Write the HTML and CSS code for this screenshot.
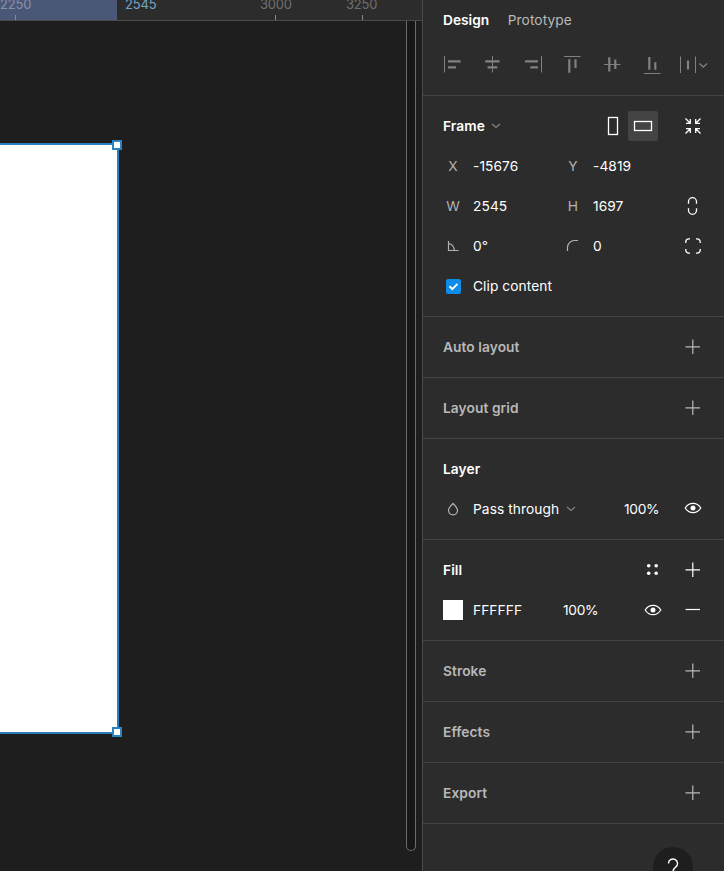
FILE: index.html
```html
<!DOCTYPE html>
<html lang="en">
<head>
<meta charset="utf-8">
<title>Design panel</title>
<link rel="stylesheet" href="styles.css">
</head>
<body>
<svg class="defs" aria-hidden="true">
  <symbol id="plus" viewBox="0 0 40 40"><path d="M12.500 19.800h14.500M19.800 12.500v14.500" stroke-width="1.200"/></symbol>
  <symbol id="chevron" viewBox="0 0 10 6"><path d="M1 1l4 3.500L9 1" stroke-width="1.200"/></symbol>
  <symbol id="eye" viewBox="0 0 40 40"><path d="M12.200 20c1.800-3 4.500-4.700 7.800-4.700s6 1.700 7.800 4.700c-1.800 3-4.500 4.700-7.800 4.700s-6-1.700-7.800-4.700z" stroke-width="1.200"/><circle cx="20" cy="20" r="2.500" fill="currentColor" stroke="none"/></symbol>
</svg>
<div class="app">
  <main class="canvas">
    <div class="ruler">
      <div class="range"></div>
      <span class="mark m2250">2250</span>
      <span class="mark m2545">2545</span>
      <span class="mark m3000">3000</span>
      <span class="mark m3250">3250</span>
      <i class="tick t2250"></i><i class="tick t3000"></i><i class="tick t3250"></i>
    </div>
    <div class="frame"><i class="handle top"></i><i class="handle bottom"></i></div>
    <div class="scrollbar"></div>
  </main>
  <aside class="panel">
    <nav class="tabs"><span class="active">Design</span><span>Prototype</span></nav>
    <div class="align">
      <svg class="icon"><path d="M11.500 11v16.500"/><path class="bar" d="M15 16.300h12.700M15 22.300h8"/></svg>
      <svg class="icon"><path d="M19.500 11v16.500"/><path class="bar" d="M12.200 16.300h14.400M14.500 22.300h9.800"/></svg>
      <svg class="icon"><path d="M28.500 11v16.500"/><path class="bar" d="M12 16.300h13M17.300 22.300h7.700"/></svg>
      <svg class="icon"><path d="M11 11.500h16.700"/><path class="bar" d="M16.300 14.300v13.400M22.500 14.300v8.700"/></svg>
      <svg class="icon"><path d="M11 19.500h16.500"/><path class="bar" d="M16.300 12.300v14.200M22.300 14.500v9.500"/></svg>
      <svg class="icon"><path d="M11 28.500h16.700"/><path class="bar" d="M16.300 12v12.700M22.300 17.300v7.400"/></svg>
      <svg class="icon"><path d="M7.500 11.500v16.500M22.500 11.500v16.500"/><path class="bar" d="M15 15.500v9"/><path d="M26.500 18.500l3.800 3.500 3.800-3.500" stroke-width="1.300"/></svg>
    </div>
    <section>
      <div class="row">
        <h2 class="title">Frame <svg class="chev"><use href="#chevron"/></svg></h2>
        <div class="orient">
          <span class="btn"><svg class="btn-icon"><rect x="10.500" y="6.500" width="9" height="17" stroke-width="1.300"/></svg></span>
          <span class="btn on"><svg class="btn-icon"><rect x="6.500" y="10.500" width="17" height="9" stroke-width="1.300"/></svg></span>
        </div>
        <svg class="icon end"><path d="M12.500 12.500l4.500 4.500M27.500 12.500l-4.500 4.500M12.500 27.500l4.500-4.500M27.500 27.500l-4.500-4.500M17.300 13v4.300H13M22.700 13v4.300H27M13 22.700h4.300V27M27 22.700h-4.300V27" stroke-width="1.300"/></svg>
      </div>
      <div class="grid"><span class="key">X</span><span>-15676</span><span class="key">Y</span><span>-4819</span></div>
      <div class="grid"><span class="key">W</span><span>2545</span><span class="key">H</span><span>1697</span>
        <svg class="icon"><path d="M15.500 17.800v-2.100a4 4 0 0 1 8 0v2.100M15.500 22.200v2.100a4 4 0 0 0 8 0v-2.100" stroke-width="1.300"/></svg></div>
      <div class="grid">
        <svg class="icon dim"><path d="M15.500 15v9.500h10M15.500 17.500c3.300.6 5.500 3 5.800 6.800" stroke-width="1.200"/></svg><span>0°</span>
        <svg class="icon dim"><path d="M14.500 25v-3.500a7 7 0 0 1 7-7h3.500" stroke-width="1.200"/></svg><span>0</span>
        <svg class="icon"><path d="M12.800 17v-1.200a3 3 0 0 1 3-3H17M23 12.800h1.200a3 3 0 0 1 3 3V17M27.200 23v1.200a3 3 0 0 1-3 3H23M17 27.200h-1.200a3 3 0 0 1-3-3V23" stroke-width="1.300"/></svg></div>
      <div class="grid"><span class="check"><svg class="check-icon"><path d="M3.500 7.300l2.800 2.800 5.200-5.200" stroke-width="2"/></svg></span><span>Clip content</span></div>
    </section>
    <section class="empty"><div class="row"><h2 class="title">Auto layout</h2><svg class="icon end"><use href="#plus"/></svg></div></section>
    <section class="empty"><div class="row"><h2 class="title">Layout grid</h2><svg class="icon end"><use href="#plus"/></svg></div></section>
    <section>
      <div class="row"><h2 class="title">Layer</h2></div>
      <div class="grid layer">
        <svg class="icon dim"><path d="M20 14.500c2.500 2.600 4.500 4.400 4.500 6.800a4.500 4.500 0 0 1-9 0c0-2.400 2-4.200 4.500-6.800z" stroke-width="1.200"/></svg>
        <span>Pass through <svg class="chev"><use href="#chevron"/></svg></span><span class="percent">100%</span>
        <svg class="icon eye"><use href="#eye"/></svg></div>
    </section>
    <section>
      <div class="row"><h2 class="title">Fill</h2>
        <svg class="icon end"><g fill="currentColor" stroke="none"><circle cx="15.700" cy="15.800" r="1.800"/><circle cx="23.200" cy="15.800" r="1.800"/><circle cx="15.700" cy="23.300" r="1.800"/><circle cx="23.200" cy="23.300" r="1.800"/></g></svg>
        <svg class="icon"><use href="#plus"/></svg></div>
      <div class="grid fill"><span class="swatch"></span><span>FFFFFF</span><span class="percent">100%</span>
        <svg class="icon"><use href="#eye"/></svg><svg class="icon"><path d="M12.500 19.500h14.500" stroke-width="1.200"/></svg></div>
    </section>
    <section class="empty"><div class="row"><h2 class="title">Stroke</h2><svg class="icon end"><use href="#plus"/></svg></div></section>
    <section class="empty"><div class="row"><h2 class="title">Effects</h2><svg class="icon end"><use href="#plus"/></svg></div></section>
    <section class="empty"><div class="row"><h2 class="title">Export</h2><svg class="icon end"><use href="#plus"/></svg></div></section>
  </aside>
  <div class="help"><svg class="help-icon"><path d="M15.500 16.500a4.500 4.500 0 1 1 7.400 3.400c-1.800 1.500-2.900 2.300-2.900 5.100M20 28v1.500" stroke-width="1.400"/></svg></div>
</div>
</body>
</html>
```
FILE: styles.css
```css
* { box-sizing: border-box; }
body { margin: 0; background: #1e1e1e; color: #fff; font: 13.75px/20px Inter, sans-serif; letter-spacing: 0.07px; }
.defs { position: absolute; width: 0; height: 0; }
svg { fill: none; stroke: currentColor; flex: none; }
.app { position: relative; display: flex; width: 724px; height: 871px; overflow: hidden; }

.canvas { position: relative; width: 422px; background: #1e1e1e; overflow: hidden; }
.ruler { position: relative; height: 21px; background: #2c2c2c; border-bottom: 1px solid #494949; }
.range { width: 117px; height: 20px; background: #4a5878; }
.mark { position: absolute; top: -6px; color: #6f6f6f; font-size: 13px; letter-spacing: -0.2px; }
.m2250 { left: 0; color: #8990a3; }
.m2545 { left: 125px; color: #72a5c8; }
.m3000 { left: 260px; }
.m3250 { left: 346px; }
.tick { position: absolute; top: 15px; width: 1px; height: 5px; background: #8a8a8a; }
.t2250 { left: 15px; }
.t3000 { left: 275px; }
.t3250 { left: 362px; }
.frame { position: absolute; left: -10px; top: 143px; width: 129px; height: 591px; background: #fff; border: 2px solid #2b7fb8; }
.handle { position: absolute; right: -5px; width: 10px; height: 10px; background: #fff; border: 2px solid #2b83bf; }
.top { top: -5px; }
.bottom { bottom: -5px; }
.scrollbar { position: absolute; left: 406px; top: 21px; width: 10px; height: 830px; background: #161616; border: 1px solid #6c6c6c; border-top: 0; border-radius: 0 0 5px 5px; }

.panel { width: 302px; background: #2c2c2c; border-left: 1px solid #494949; }
.tabs { display: flex; gap: 18.5px; height: 45px; padding: 10px 0 0 20px; color: #b8b8b8; }
.active { color: #fff; font-weight: 600; letter-spacing: 0; }
.align { display: flex; height: 51px; padding-left: 10px; color: #808080; border-bottom: 1px solid #444; }
.bar { stroke-width: 2.2; }
.icon { display: block; width: 40px; height: 40px; }
section { padding: 10px 11px 10px 10px; border-bottom: 1px solid #444; }
.row { display: flex; align-items: center; height: 40px; padding-left: 10px; }
.title { margin: 0; font: inherit; font-weight: 600; }
.chev { width: 10px; height: 6px; margin: 0 0 2px 2.5px; color: #858585; }
.end { margin-left: auto; }
.empty { color: #b8b8b8; }
.orient { display: flex; margin-left: auto; }
.btn { width: 30px; height: 30px; border-radius: 2px; }
.btn.on { background: #444; }
.btn-icon { display: block; width: 30px; height: 30px; }
.orient + .end { margin-left: 15px; }
.grid { display: grid; grid-template-columns: 40px 80px 40px 80px 40px; align-items: center; height: 40px; white-space: nowrap; }
.key { text-align: center; color: #b3b3b3; }
.dim { color: #b3b3b3; }
.percent { letter-spacing: -0.3px; }
.check { display: flex; width: 15px; height: 15px; margin-left: 13px; background: #0d8ce9; border-radius: 2px; }
.check-icon { width: 15px; height: 15px; }
.layer { grid-template-columns: 40px 151px 49px 40px; }
.fill { grid-template-columns: 40px 90px 70px 40px 40px; }
.swatch { width: 20px; height: 20px; margin-left: 10px; background: #fff; }
.eye { margin-top: -2px; }
.help { position: absolute; left: 653px; top: 847px; width: 40px; height: 40px; border-radius: 50%; background: #1e1e1e; }
.help-icon { display: block; width: 40px; height: 40px; }
```
